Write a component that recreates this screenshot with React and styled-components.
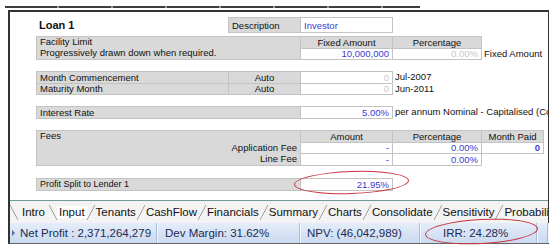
import React from 'react';
import styled, {createGlobalStyle} from 'styled-components';

const GlobalStyle = createGlobalStyle`
    html, body {
        margin: 0;
        padding: 0;
        background: #fff;
    }
    body {
        font-family: "Liberation Sans", Arial, sans-serif;
    }
`;

const BLUE = '#3a3acf';
const FAINT = '#c9c9c9';

const Page = styled.div`
    position: relative;
    width: 558px;
    height: 249px;
    overflow: hidden;
    padding-top: 6px;
    box-sizing: border-box;
`;

const ToolbarEdge = styled.div`
    margin-left: 5px;
    width: 415px;
    height: 2px;
    background: repeating-linear-gradient(90deg, #3d3d3d 0 52px, #9a9a9a 52px 54px);
`;

const Frame = styled.div`
    margin: 2px 0 0 8px;
    width: 541px;
    height: 234px;
    box-sizing: border-box;
    border-top: 2px solid #333;
    border-left: 2px solid #333;
    border-right: 1px solid #333;
    border-bottom: 1px solid #666;
    display: flex;
    flex-direction: column;
`;

const Sheet = styled.div`
    flex: 1;
    overflow: hidden;
    padding: 5px 0 0 26px;
`;

const Block = styled.div`
    display: grid;
    grid-template-columns: 192px 72px 92px 89px 62px 1fr;
    grid-auto-rows: ${p => p.$rowH || 11.5}px;
    margin-top: ${p => p.$gap || 0}px;
    font-size: 9.5px;
    color: #111;
`;

const fills = {
    gray: '#d9d9d9',
    white: '#fff',
};

const Cell = styled.div`
    grid-column: ${p => p.$col} / span ${p => p.$span || 1};
    grid-row: ${p => p.$row || 1} / span ${p => p.$rows || 1};
    background: ${p => fills[p.$fill] || 'transparent'};
    border: ${p => p.$fill ? '1px solid #c3c3c3' : 'none'};
    margin: 0 ${p => p.$fill ? -1 : 0}px ${p => p.$fill ? -1 : 0}px 0;
    box-sizing: border-box;
    padding: 0 3px;
    display: flex;
    flex-direction: ${p => p.$stack ? 'column' : 'row'};
    align-items: ${p => p.$stack ? 'stretch' : 'center'};
    justify-content: ${p => p.$align === 'right' ? 'flex-end' : p.$align === 'center' ? 'center' : 'flex-start'};
    color: ${p => p.$tone === 'blue' ? BLUE : p.$tone === 'faint' ? FAINT : '#111'};
    font-weight: ${p => p.$bold ? 'bold' : 'normal'};
    font-size: ${p => p.$size || 9.5}px;
    white-space: nowrap;
    overflow: hidden;
    z-index: ${p => p.$fill ? 0 : 1};
`;

const Line = styled.div`
    height: 11.5px;
    line-height: 10px;
`;

const TabBar = styled.div`
    height: 23px;
    box-sizing: border-box;
    border-top: 1px solid #6f9a9a;
    background: #f3f3f3;
    display: flex;
    align-items: center;
    font-size: 11.5px;
    color: #111;
    white-space: nowrap;
    overflow: hidden;
`;

const Slant = styled.span`
    flex: none;
    width: 8px;
    height: 15px;
    background: linear-gradient(${p => p.$back ? 'to top right' : 'to bottom right'},
        transparent calc(50% - 0.7px), #8c8c8c 50%, transparent calc(50% + 0.7px));
`;

const Tab = styled.span`
    padding: 0 ${p => p.$pad ?? 1}px;
    background: ${p => p.$active ? '#fff' : 'transparent'};
`;

const StatusBar = styled.div`
    height: 20px;
    display: flex;
    background: linear-gradient(#e4edf9, #cbdaf0);
    font-size: 11.5px;
    color: #1b2a57;
    white-space: nowrap;
`;

const StatusPanel = styled.div`
    flex: none;
    width: ${p => p.$w}px;
    box-sizing: border-box;
    padding-left: ${p => p.$pad}px;
    display: flex;
    align-items: center;
    border-right: 1px solid #a8bbd8;
    box-shadow: 1px 0 0 #f3f7fd;
`;

const Caret = styled.span`
    width: 0;
    height: 0;
    margin-right: 5px;
    border-top: 3px solid transparent;
    border-bottom: 3px solid transparent;
    border-left: 3px solid #4f6da0;
`;

const Ring = styled.div`
    position: absolute;
    left: ${p => p.$x}px;
    top: ${p => p.$y}px;
    width: ${p => p.$w}px;
    height: ${p => p.$h}px;
    box-sizing: border-box;
    border: 1.5px solid #c9343f;
    border-radius: 50%;
    transform: rotate(${p => p.$tilt || 0}deg);
    pointer-events: none;
`;

const tabs = ['Tenants', 'CashFlow', 'Financials', 'Summary', 'Charts', 'Consolidate', 'Sensitivity', 'Probabilities'];

const statusItems = [
    {w: 147, pad: 2, text: 'Net Profit : 2,371,264,279', caret: true},
    {w: 143, pad: 8, text: 'Dev Margin: 31.62%'},
    {w: 120, pad: 7, text: 'NPV: (46,042,989)'},
    {w: 117, pad: 23, text: 'IRR: 24.28%'},
    {w: 11, pad: 0, text: ''},
];

export default function App() {
    return (
        <Page>
            <GlobalStyle/>
            <ToolbarEdge/>
            <Frame>
                <Sheet>
                    <Block $rowH={15}>
                        <Cell $col={1} $bold $size={11}>Loan 1</Cell>
                        <Cell $col={2} $fill="gray">Description</Cell>
                        <Cell $col={3} $fill="white" $tone="blue">Investor</Cell>
                    </Block>

                    <Block $gap={4}>
                        <Cell $col={1} $span={2} $rows={2} $fill="gray" $stack>
                            <Line>Facility Limit</Line>
                            <Line>Progressively drawn down when required.</Line>
                        </Cell>
                        <Cell $col={3} $fill="gray" $align="center">Fixed Amount</Cell>
                        <Cell $col={4} $fill="gray" $align="center">Percentage</Cell>
                        <Cell $col={3} $row={2} $fill="white" $align="right" $tone="blue">10,000,000</Cell>
                        <Cell $col={4} $row={2} $fill="white" $align="right" $tone="faint">0.00%</Cell>
                        <Cell $col={5} $row={2} $span={2}>Fixed Amount</Cell>
                    </Block>

                    <Block $gap={12}>
                        <Cell $col={1} $fill="gray">Month Commencement</Cell>
                        <Cell $col={2} $fill="gray" $align="center">Auto</Cell>
                        <Cell $col={3} $fill="white" $align="right" $tone="faint">0</Cell>
                        <Cell $col={4}>Jul-2007</Cell>
                        <Cell $col={1} $row={2} $fill="gray">Maturity Month</Cell>
                        <Cell $col={2} $row={2} $fill="gray" $align="center">Auto</Cell>
                        <Cell $col={3} $row={2} $fill="white" $align="right" $tone="faint">0</Cell>
                        <Cell $col={4} $row={2}>Jun-2011</Cell>
                    </Block>

                    <Block $gap={12}>
                        <Cell $col={1} $span={2} $fill="gray">Interest Rate</Cell>
                        <Cell $col={3} $fill="white" $align="right" $tone="blue">5.00%</Cell>
                        <Cell $col={4} $span={3}>per annum Nominal - Capitalised (Compounding)</Cell>
                    </Block>

                    <Block $gap={12.5}>
                        <Cell $col={1} $span={2} $rows={3} $fill="gray" $stack>
                            <Line>Fees</Line>
                        </Cell>
                        <Cell $col={3} $fill="gray" $align="center">Amount</Cell>
                        <Cell $col={4} $fill="gray" $align="center">Percentage</Cell>
                        <Cell $col={5} $fill="gray" $align="center">Month Paid</Cell>
                        <Cell $col={1} $span={2} $row={2} $align="right">Application Fee</Cell>
                        <Cell $col={3} $row={2} $fill="white" $align="right" $tone="blue">-</Cell>
                        <Cell $col={4} $row={2} $fill="white" $align="right" $tone="blue">0.00%</Cell>
                        <Cell $col={5} $row={2} $fill="white" $align="right" $tone="blue" $bold>0</Cell>
                        <Cell $col={1} $span={2} $row={3} $align="right">Line Fee</Cell>
                        <Cell $col={3} $row={3} $fill="white" $align="right" $tone="blue">-</Cell>
                        <Cell $col={4} $row={3} $fill="white" $align="right" $tone="blue">0.00%</Cell>
                    </Block>

                    <Block $gap={13.5}>
                        <Cell $col={1} $span={2} $fill="gray" $size={9}>Profit Split to Lender 1</Cell>
                        <Cell $col={3} $fill="white" $align="right" $tone="blue">21.95%</Cell>
                    </Block>
                </Sheet>

                <TabBar>
                    <Slant $back/>
                    <Tab $pad={4}>Intro</Tab>
                    <Slant $back/>
                    <Tab $active $pad={2}>Input</Tab>
                    {tabs.map(name => (
                        <React.Fragment key={name}>
                            <Slant/>
                            <Tab>{name}</Tab>
                        </React.Fragment>
                    ))}
                </TabBar>

                <StatusBar>
                    {statusItems.map((item, i) => (
                        <StatusPanel key={i} $w={item.w} $pad={item.pad}>
                            {item.caret && <Caret/>}
                            {item.text}
                        </StatusPanel>
                    ))}
                </StatusBar>
            </Frame>

            <Ring $x={294} $y={171} $w={115} $h={23} $tilt={-2}/>
            <Ring $x={425} $y={219} $w={113} $h={25} $tilt={-3}/>
        </Page>
    );
}
